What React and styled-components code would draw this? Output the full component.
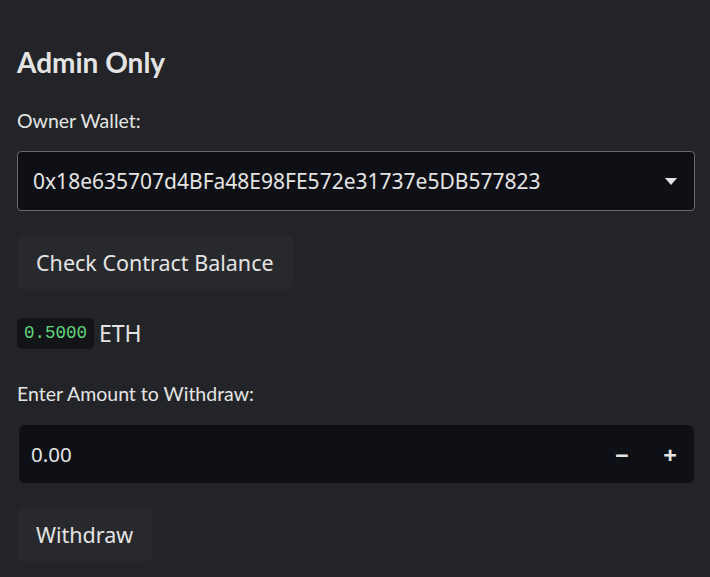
import styled, { createGlobalStyle } from "styled-components";

const GlobalStyle = createGlobalStyle`
  body {
    margin: 0;
    background: #232427;
    font-family: Lato, "Noto Sans", sans-serif;
    color: #e4e4e4;
  }
`;

const Page = styled.div`
  display: flex;
  flex-direction: column;
  padding: 44px 15px 0 17px;
`;

const Title = styled.h2`
  margin: 0;
  font-size: 28px;
  font-weight: 700;
  line-height: 36px;
`;

const Label = styled.div`
  font-size: 19.5px;
  line-height: 24px;
  margin-top: ${(p) => p.$top}px;
`;

const Select = styled.div`
  display: flex;
  align-items: center;
  justify-content: space-between;
  height: 58px;
  margin-top: 18px;
  padding: 0 17px 0 15px;
  background: #0e1015;
  border: 1px solid #6b6b66;
  border-radius: 4px;
  font-family: "Noto Sans", sans-serif;
  font-size: 21px;
`;

const Caret = styled.span`
  width: 0;
  height: 0;
  border-left: 6px solid transparent;
  border-right: 6px solid transparent;
  border-top: 7px solid #e4e4e4;
`;

const Button = styled.button`
  align-self: flex-start;
  height: 53px;
  margin-top: ${(p) => p.$top}px;
  padding: 0 19px;
  background: #28292c;
  border: none;
  border-radius: 6px;
  color: #e4e4e4;
  font-family: "Noto Sans", sans-serif;
  font-size: 21.5px;
`;

const Balance = styled.div`
  display: flex;
  align-items: center;
  gap: 5px;
  margin-top: 28px;
  font-family: "Noto Sans", sans-serif;
  font-size: 23px;
`;

const Code = styled.code`
  display: inline-flex;
  align-items: center;
  height: 31px;
  padding: 0 7px;
  background: #121418;
  border-radius: 5px;
  color: #62d67f;
  font-family: "Liberation Mono", monospace;
  font-size: 17.5px;
`;

const NumberInput = styled.div`
  display: flex;
  align-items: center;
  height: 58px;
  margin: 19px 1px 0 2px;
  padding: 0 4px 0 12px;
  background: #0e1015;
  border-radius: 6px;
  font-family: "Noto Sans", sans-serif;
  font-size: 20.5px;
`;

const Value = styled.span`
  flex: 1;
`;

const Step = styled.span`
  width: ${(p) => p.$w}px;
  text-align: center;
  font-size: 24px;
  font-weight: 700;
`;

export default function App() {
  return (
    <>
      <GlobalStyle />
      <Page>
        <Title>Admin Only</Title>
        <Label $top={29}>Owner Wallet:</Label>
        <Select>
          <span>0x18e635707d4BFa48E98FE572e31737e5DB577823</span>
          <Caret />
        </Select>
        <Button $top={25}>Check Contract Balance</Button>
        <Balance>
          <Code>0.5000</Code>
          <span>ETH</span>
        </Balance>
        <Label $top={33}>Enter Amount to Withdraw:</Label>
        <NumberInput>
          <Value>0.00</Value>
          <Step $w={56}>−</Step>
          <Step $w={40}>+</Step>
        </NumberInput>
        <Button $top={25}>Withdraw</Button>
      </Page>
    </>
  );
}
